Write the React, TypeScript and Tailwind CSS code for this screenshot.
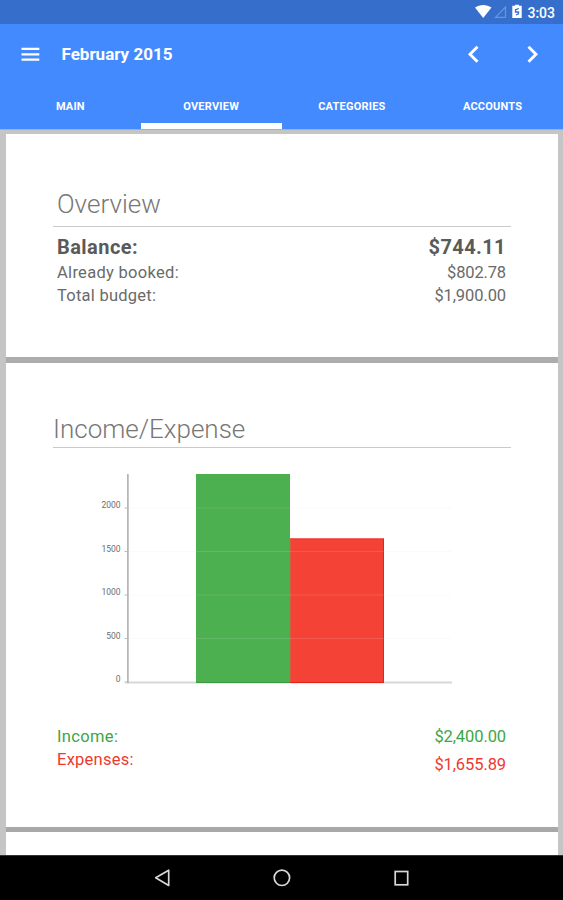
import React from "react";

type RowProps = { label: string; value: string; className: string; labelClass?: string; valueClass?: string };

const tabs = ["MAIN", "OVERVIEW", "CATEGORIES", "ACCOUNTS"];

const ticks = [
  { label: "2000", y: 35 },
  { label: "1500", y: 78.5 },
  { label: "1000", y: 122 },
  { label: "500", y: 165.5 },
  { label: "0", y: 209 },
];

function StatusBar() {
  return (
    <div className="flex h-[24px] shrink-0 items-center justify-end bg-[#366fcb] pr-[8px] text-white">
      <svg className="h-[24px] w-[50px]" viewBox="0 0 50 24">
        <path d="M0 7.500C5 4 11.500 4 16.500 7.500L8.200 18Z" fill="#fff" />
        <path d="M20.500 17.300L30.500 7V17.300Z" fill="none" stroke="#6a95dc" strokeWidth="1.200" />
        <path d="M38 5.800h2V4.800h4v1H46.700v12.200H37.300V5.800Z" fill="#fff" />
        <path d="M43.800 8.500L40.500 9.800V12H43.500V13.800L41 15" fill="none" stroke="#366fcb" strokeWidth="1.300" />
      </svg>
      <span className="ml-[2px] pt-[1px] text-[14px] leading-none font-medium">3:03</span>
    </div>
  );
}

function Header() {
  return (
    <header className="flex h-[105px] shrink-0 flex-col bg-[#448aff] text-white">
      <div className="flex h-[61px] items-center pl-[21px]">
        <svg className="h-[16px] w-[19px]" viewBox="0 0 19 16">
          <path d="M0.500 1.900H18.300M0.500 7.300H18.300M0.500 12.700H18.300" stroke="#fff" strokeWidth="2.300" />
        </svg>
        <h1 className="ml-[21.5px] flex-1 text-[17px] leading-none font-bold">February 2015</h1>
        <svg className="h-[20px] w-[75px]" viewBox="0 0 75 20">
          <path d="M11.500 1.700L4 9.200L11.500 16.700M62.500 1.700L70 9.200L62.500 16.700" fill="none" stroke="#fff" strokeWidth="2.900" />
        </svg>
        <div className="w-[22px]" />
      </div>
      <nav className="grid h-[44px] grid-cols-4">
        {tabs.map((tab) => (
          <div
            key={tab}
            className={`flex items-center justify-center border-b-[6px] pt-[5px] text-[11px] leading-none font-bold tracking-[0.02em] ${
              tab === "OVERVIEW" ? "border-white" : "border-transparent"
            }`}
          >
            {tab}
          </div>
        ))}
      </nav>
    </header>
  );
}

function Row({ label, value, className, labelClass = "", valueClass = "" }: RowProps) {
  return (
    <div className={`flex justify-between pr-[5px] pl-[4px] ${className}`}>
      <span className={labelClass}>{label}</span>
      <span className={valueClass}>{value}</span>
    </div>
  );
}

function Chart() {
  return (
    <svg className="mt-[25px] h-[212px] w-[457px] shrink-0" viewBox="0 0 457 212">
      {ticks.map((t) => (
        <g key={t.label}>
          <path d={`M74 ${t.y}H398`} stroke="#fafafa" />
          <path d={`M71.500 ${t.y}H74`} stroke="#bbb" />
          <text x="67.500" y={t.y} textAnchor="end" fontSize="8.500" fill="#6c6c6c">
            {t.label}
          </text>
        </g>
      ))}
      <path d="M72 209.500H399" stroke="#d8d8d8" strokeWidth="2.200" />
      <path d="M74.900 1V210" stroke="#b0b0b0" strokeWidth="1.600" />
      <rect x="143" y="1" width="94" height="209" fill="#4caf50" />
      <rect x="237" y="65.500" width="94" height="144.500" fill="#f44336" />
      <path d="M143 209.500H237" stroke="#3a983f" />
      <path d="M237 209.500H330.500V65.500" fill="none" stroke="#e5221a" />
      <path d="M237 66H330" stroke="#ee3329" />
      <path d="M237.200 65V209" stroke="#ac8144" strokeWidth="0.800" />
      {ticks.slice(0, 4).map((t) => (
        <path key={t.label} d={`M143 ${t.y}H${t.y > 66 ? 331 : 237}`} stroke="#fff" strokeOpacity="0.12" />
      ))}
    </svg>
  );
}

function SystemNav() {
  return (
    <footer className="flex h-[45px] shrink-0 items-center justify-center border-t border-[#333] bg-black">
      <svg className="h-[44px] w-[300px]" viewBox="132 856 300 44">
        <g fill="none" stroke="#d8d8d8" strokeWidth="1.700">
          <path d="M168.700 870.200V885.500L155.700 877.800Z" strokeLinejoin="round" />
          <circle cx="281.900" cy="877.800" r="7.700" />
          <rect x="395.200" y="871.500" width="12.500" height="13.300" />
        </g>
      </svg>
    </footer>
  );
}

export default function App() {
  return (
    <div className="flex h-[900px] w-[563px] flex-col overflow-hidden bg-[#c5c5c5] font-[Roboto,sans-serif] text-[#6a6a6a]">
      <StatusBar />
      <Header />
      <main className="flex h-[726px] flex-col border-t border-[#adafb0] pr-[5px] pl-[6px]">
        <div className="h-[4px] shrink-0" />
        <section className="flex h-[223px] shrink-0 flex-col bg-white px-[47px] pt-[50px]">
          <h2 className="h-[43px] border-b border-[#cacaca] pl-[4px] text-[26px] leading-[41px] font-light text-[#777]">
            Overview
          </h2>
          <Row
            label="Balance:"
            value="$744.11"
            className="mt-[6px] text-[20px] leading-[28px] font-bold text-[#5a5a5a]"
            labelClass="tracking-[0.45px]"
            valueClass="tracking-[0.4px]"
          />
          <Row
            label="Already booked:"
            value="$802.78"
            className="text-[16.5px] leading-[23px]"
            labelClass="tracking-[0.3px]"
            valueClass="tracking-[-0.15px]"
          />
          <Row
            label="Total budget:"
            value="$1,900.00"
            className="text-[16.5px] leading-[23px]"
            labelClass="tracking-[0.25px]"
            valueClass="tracking-[-0.1px]"
          />
        </section>
        <div className="h-[6px] shrink-0 bg-[#adadad]" />
        <section className="flex h-[464px] shrink-0 flex-col bg-white px-[47px] pt-[46px]">
          <h2 className="h-[39px] border-b border-[#cacaca] text-[26px] leading-[41px] font-light text-[#777]">
            Income/Expense
          </h2>
          <Chart />
          <Row
            label="Income:"
            value="$2,400.00"
            className="mt-[40px] text-[16.5px] leading-[23px] text-[#3da644]"
            labelClass="tracking-[0.35px]"
            valueClass="tracking-[-0.1px]"
          />
          <Row
            label="Expenses:"
            value="$1,655.89"
            className="text-[16.5px] leading-[23px] text-[#f0382e]"
            labelClass="tracking-[0.25px]"
            valueClass="pt-[5px] tracking-[-0.1px]"
          />
        </section>
        <div className="h-[5px] shrink-0 bg-[#a8a8a8]" />
        <section className="flex-1 bg-white" />
      </main>
      <SystemNav />
    </div>
  );
}
